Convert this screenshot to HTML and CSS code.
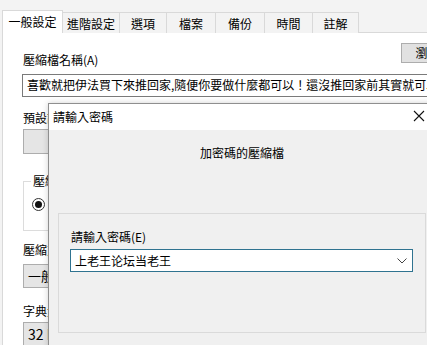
FILE: index.html
```html
<!DOCTYPE html>
<html lang="zh-Hant">
<head>
<meta charset="utf-8">
<title>壓縮檔名稱和參數</title>
<link rel="stylesheet" href="styles.css">
</head>
<body>
<div class="window">
  <div class="tabs">
    <div class="tab active w61">一般設定</div>
    <div class="tab w57">進階設定</div>
    <div class="tab w47">選項</div>
    <div class="tab w49">檔案</div>
    <div class="tab w49">備份</div>
    <div class="tab w48">時間</div>
    <div class="tab w47 last">註解</div>
  </div>
  <div class="page">
    <div class="row-top">
      <div class="label first">壓縮檔名稱(A)</div>
      <div class="btn">瀏覽(B)...</div>
    </div>
    <div class="textbox">喜歡就把伊法買下來推回家,隨便你要做什麼都可以！還沒推回家前其實就可以了</div>
    <div class="label l-profile">預設設定檔(F)</div>
    <div class="combo gray c1">預設設定檔</div>
    <div class="group">
      <div class="group-title">壓縮檔格式</div>
      <div class="radio-row"><span class="radio"></span><span>RAR</span></div>
    </div>
    <div class="label l-method">壓縮方式(C)</div>
    <div class="combo gray c2">一般</div>
    <div class="label l-dict">字典大小(I)</div>
    <div class="combo gray c3">32 MB</div>
  </div>

  <div class="dialog">
    <div class="titlebar">
      <span class="title">請輸入密碼</span>
      <svg class="close" width="12" height="12" viewBox="0 0 12 12"><path d="M1 1L11 11M11 1L1 11" stroke="#111" stroke-width="1.1" fill="none"/></svg>
    </div>
    <div class="dlg-body">
      <div class="message">加密碼的壓縮檔</div>
      <div class="panel">
        <div class="plabel">請輸入密碼(E)</div>
        <div class="pcombo">
          <span class="ptext">上老王论坛当老王</span>
          <svg class="chev" width="10" height="6" viewBox="0 0 10 6"><path d="M0.5 0.5L5 5L9.5 0.5" stroke="#444" stroke-width="1" fill="none"/></svg>
        </div>
      </div>
    </div>
  </div>
</div>
</body>
</html>
```

FILE: styles.css
```css
* { box-sizing: border-box; }
html, body { margin: 0; padding: 0; }
body {
  width: 427px;
  height: 345px;
  overflow: hidden;
  background: #f3f3f3;
  font-family: "Noto Sans CJK TC", "Noto Sans", sans-serif;
  font-size: 12px;
  line-height: 16px;
  color: #000;
}
.window {
  position: relative;
  width: 427px;
  height: 345px;
  padding-left: 2px;
  overflow: hidden;
}
.tabs {
  display: flex;
  align-items: flex-end;
  height: 33px;
  padding-top: 10px;
  position: relative;
  z-index: 2;
}
.tab {
  height: 21px;
  border: 1px solid #d9d9d9;
  border-bottom: none;
  border-right: none;
  background: #f3f3f3;
  display: flex;
  align-items: center;
  justify-content: center;
  white-space: nowrap;
  padding-top: 1px;
}
.tab.last { border-right: 1px solid #d9d9d9; }
.tab.active {
  height: 23px;
  background: #fff;
  border-right: 1px solid #d9d9d9;
  margin-right: -1px;
  position: relative;
  z-index: 3;
  padding-top: 0;
}
.w61 { width: 61px; }
.w57 { width: 57px; }
.w47 { width: 47px; }
.w49 { width: 49px; }
.w48 { width: 48px; }

.page {
  margin-top: -1px;
  width: 520px;
  height: 313px;
  background: #fff;
  border-top: 1px solid #d9d9d9;
  border-left: 1px solid #d9d9d9;
  padding: 10px 0 0 20px;
  position: relative;
  z-index: 1;
}
.row-top {
  display: flex;
  align-items: flex-start;
}
.label { white-space: nowrap; }
.label.first { margin-top: 9px; }
.btn {
  margin-left: 303px;
  width: 75px;
  height: 20px;
  background: #e1e1e1;
  border: 1px solid #adadad;
  padding-left: 13px;
  line-height: 18px;
  white-space: nowrap;
  overflow: hidden;
}
.textbox {
  margin-top: 6px;
  margin-left: -1px;
  width: 460px;
  height: 23px;
  border: 1px solid #7a7a7a;
  padding: 2px 0 0 4px;
  white-space: nowrap;
  overflow: hidden;
  background: #fff;
}
.l-profile { margin-top: 13px; }
.combo {
  width: 200px;
  border: 1px solid #adadad;
  background: #e5e5e5;
  padding: 3px 0 0 4px;
  white-space: nowrap;
  overflow: hidden;
  font-size: 13px;
}
.c1 { margin-top: 3px; height: 25px; padding-left: 30px; }
.group {
  margin-top: 27px;
  height: 50px;
  width: 200px;
  border: 1px solid #dcdcdc;
  position: relative;
  padding: 14px 0 0 8px;
}
.group-title {
  position: absolute;
  top: -9px;
  left: 7px;
  background: #fff;
  padding: 0 2px;
  white-space: nowrap;
}
.radio-row {
  display: flex;
  align-items: center;
  gap: 6px;
}
.radio {
  width: 13px;
  height: 13px;
  border: 1px solid #333;
  border-radius: 50%;
  display: inline-flex;
  align-items: center;
  justify-content: center;
}
.radio::after {
  content: "";
  width: 7px;
  height: 7px;
  border-radius: 50%;
  background: #111;
}
.l-method { margin-top: 11px; }
.c2 { margin-top: 6px; height: 24px; font-size: 13px; }
.l-dict { margin-top: 15px; }
.c3 { margin-top: 3px; height: 26px; font-size: 14px; }

.dialog {
  position: absolute;
  left: 48px;
  top: 103px;
  width: 392px;
  height: 260px;
  border: 1px solid #8f8f8f;
  background: #f0f0f0;
  z-index: 10;
  box-shadow: 0 0 6px rgba(0,0,0,0.18);
}
.titlebar {
  height: 26px;
  background: #fff;
  display: flex;
  align-items: center;
  justify-content: space-between;
  padding: 0 14px 0 4px;
}
.title { white-space: nowrap; }
.close { display: block; margin-top: -2px; }
.dlg-body { padding-top: 15px; }
.message { text-align: center; margin-left: -4px; }
.panel {
  margin: 52px 0 0 9px;
  width: 368px;
  height: 120px;
  border: 1px solid #dadada;
  padding: 15px 0 0 12px;
}
.plabel { white-space: nowrap; }
.pcombo {
  margin-top: 4px;
  margin-left: -1px;
  width: 343px;
  height: 23px;
  background: #fff;
  border: 1px solid #2f7390;
  display: flex;
  align-items: center;
  justify-content: space-between;
  padding: 0 5px 0 4px;
}
.ptext {
  font-family: "Noto Sans CJK SC", "Noto Sans CJK TC", sans-serif;
  white-space: nowrap;
}
.chev { display: block; }
```
